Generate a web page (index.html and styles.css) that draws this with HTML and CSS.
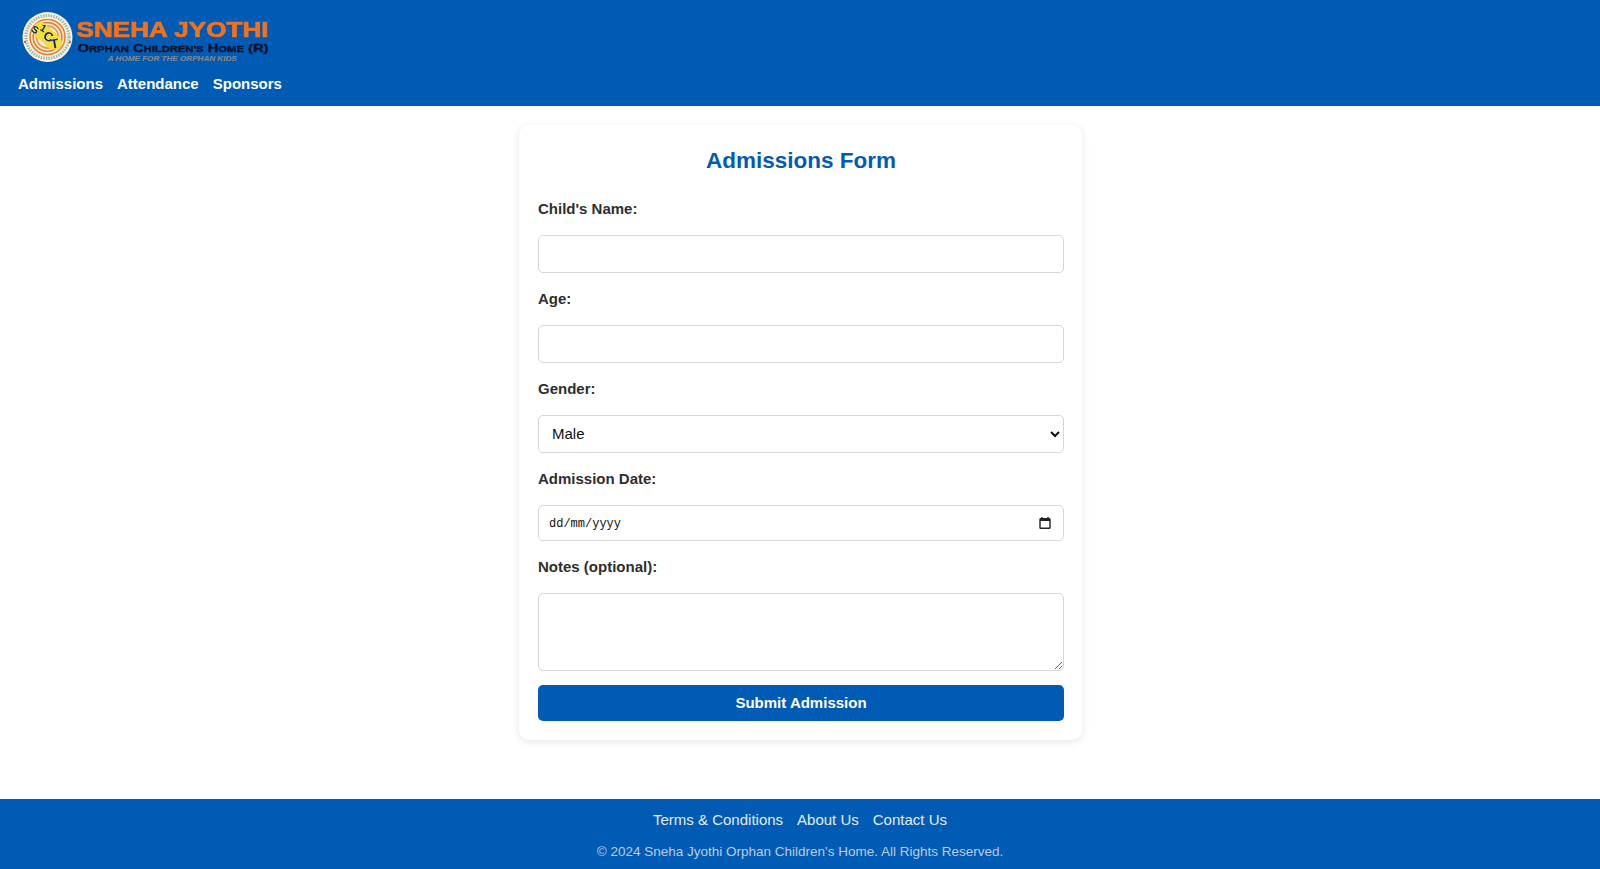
FILE: index.html
```html
<!DOCTYPE html>
<html lang="en">
<head>
<meta charset="utf-8">
<title>Admissions Form</title>
<link rel="stylesheet" href="styles.css">
</head>
<body>
<header class="site-header">
  <svg class="logo" width="252" height="56" viewBox="0 0 252 56" role="img" aria-label="Sneha Jyothi logo">
    <circle cx="27.5" cy="27" r="25" fill="#f3f4ea"/>
    <circle cx="27.5" cy="27" r="21.5" fill="none" stroke="#a4b39a" stroke-width="3" stroke-dasharray="1.4 1.2"/>
    <circle cx="27.5" cy="27" r="19" fill="#fbf6ee"/>
    <circle cx="27.5" cy="27" r="17.5" fill="none" stroke="#ee7d2a" stroke-width="1.6"/>
    <circle cx="27.5" cy="27" r="14.3" fill="none" stroke="#ee7d2a" stroke-width="1.8"/>
    <circle cx="27.5" cy="27" r="11" fill="none" stroke="#f09a4a" stroke-width="1.8"/>
    <path d="M13.5 17 C15.5 11 23.5 11 26.5 15 L37.5 25 C42.5 30 43.5 35 39.5 38 C35.5 41 31.5 40 27.5 37 L16.5 27 C13.5 24 12.5 21 13.5 17 Z" fill="#f4df3a"/>
    <text x="12" y="23" class="logo-s" transform="rotate(30 15 19)">S</text>
    <text x="20" y="21" class="logo-s" transform="rotate(30 22 19)">1</text>
    <text x="23.5" y="31" class="logo-c" transform="rotate(20 28 27)">C</text>
    <text x="30.5" y="38" class="logo-c" transform="rotate(-10 35 33)">T</text>
    <circle cx="5" cy="32" r="1.1" fill="#d8383a"/>
    <circle cx="50" cy="32" r="1.1" fill="#d8383a"/>
    <text x="56.5" y="27" class="logo-title" textLength="192" lengthAdjust="spacingAndGlyphs">SNEHA JYOTHI</text>
    <text x="57.5" y="42" class="logo-sub" textLength="191" lengthAdjust="spacingAndGlyphs">O<tspan class="logo-small">RPHAN</tspan> C<tspan class="logo-small">HILDREN'S</tspan> H<tspan class="logo-small">OME</tspan> (R)</text>
    <text x="88" y="50.5" class="logo-tag" textLength="129" lengthAdjust="spacingAndGlyphs">A HOME FOR THE ORPHAN KIDS</text>
  </svg>
  <nav class="main-nav">
    <a href="#">Admissions</a>
    <a href="#">Attendance</a>
    <a href="#">Sponsors</a>
  </nav>
</header>

<main class="content">
  <form class="card">
    <h2 class="card-title">Admissions Form</h2>
    <label class="field-label" for="name">Child's Name:</label>
    <input class="control" id="name" type="text">
    <label class="field-label" for="age">Age:</label>
    <input class="control" id="age" type="number">
    <label class="field-label" for="gender">Gender:</label>
    <select class="control control-select" id="gender"><option>Male</option><option>Female</option></select>
    <label class="field-label" for="date">Admission Date:</label>
    <div class="control date-field">
      <input class="date-input" id="date" type="text" placeholder="dd/mm/yyyy">
      <svg class="date-icon" width="12" height="12" viewBox="0 0 12 12" aria-hidden="true">
        <path d="M3 0v2M9 0v2" stroke="#222" stroke-width="1.4"/>
        <rect x="1" y="1.6" width="10" height="9.6" fill="none" stroke="#222" stroke-width="1.4" rx=".8"/>
        <rect x="1" y="1.6" width="10" height="2.4" fill="#222"/>
      </svg>
    </div>
    <label class="field-label" for="notes">Notes (optional):</label>
    <textarea class="control control-notes" id="notes"></textarea>
    <button class="submit" type="button">Submit Admission</button>
  </form>
</main>

<footer class="site-footer">
  <nav class="footer-nav">
    <a href="#">Terms &amp; Conditions</a>
    <a href="#">About Us</a>
    <a href="#">Contact Us</a>
  </nav>
  <p class="copyright">© 2024 Sneha Jyothi Orphan Children's Home. All Rights Reserved.</p>
</footer>
</body>
</html>
```
FILE: styles.css
```css
* { box-sizing: border-box; }
html, body { margin: 0; height: 100%; }
body {
  font-family: "Liberation Sans", Arial, sans-serif;
  color: #2e2e2e;
  background: #fff;
  display: flex;
  flex-direction: column;
  min-height: 869px;
}
.site-header {
  background: #005bb5;
  height: 106px;
  padding: 10px 18px 0;
  display: flex;
  flex-direction: column;
  align-items: flex-start;
}
.logo { display: block; margin-left: 2px; filter: blur(.35px); }
.logo-title { font: 900 21.7px "Liberation Sans", Arial, sans-serif; fill: #f2711c; stroke: #f2711c; stroke-width: .7px; }
.logo-sub { font: 700 11.6px "Liberation Sans", Arial, sans-serif; fill: #0b1530; stroke: #0b1530; stroke-width: .4px; }
.logo-small { font-size: 8.8px; }
.logo-tag { font: italic 700 6.4px "Liberation Sans", Arial, sans-serif; fill: #7f8690; stroke: #7f8690; stroke-width: .15px; }
.logo-s { font: 700 10px "Liberation Sans", Arial, sans-serif; fill: #142a6a; }
.logo-c { font: 700 13px "Liberation Sans", Arial, sans-serif; fill: #142a6a; }
.main-nav { display: flex; gap: 14px; margin-top: 9px; }
.main-nav a { color: #fff; font-weight: 700; font-size: 15px; line-height: 18px; text-decoration: none; }
.content { flex: 1; display: flex; justify-content: center; align-items: flex-start; padding-top: 19px; }
.card {
  width: 563px;
  margin-left: 1px;
  padding: 19px 18px 19px 19px;
  background: #fff;
  border-radius: 10px;
  box-shadow: 0 2px 8px rgba(0, 0, 0, .1);
  display: flex;
  flex-direction: column;
}
.card-title { margin: 3px 0 25px; color: #005bb5; font-size: 22.5px; line-height: 28px; text-align: center; font-weight: 700; }
.field-label { display: block; font-weight: 700; font-size: 15px; line-height: 18px; margin-bottom: 17px; }
.control {
  display: block;
  width: 100%;
  height: 38px;
  margin-bottom: 17px;
  padding: 0 13px;
  border: 1px solid #d6d6d6;
  border-radius: 5px;
  font-family: "Liberation Sans", Arial, sans-serif;
  font-size: 15px;
  color: #111;
  background: #fff;
}
.control-select { padding: 0 9px 1px; }
.date-field {
  display: flex;
  align-items: center;
  height: 36px;
  padding: 0 12px 0 10px;
}
.date-input {
  flex: 1;
  min-width: 0;
  border: 0;
  padding: 1px 0 0;
  outline: 0;
  background: none;
  font: 12px "Liberation Mono", monospace;
  color: #111;
}
.date-input::placeholder { color: #111; opacity: 1; }
.date-icon { display: block; flex: none; }
.control-notes { height: 78px; margin-bottom: 14px; resize: vertical; }
.submit {
  display: block;
  width: 100%;
  height: 36px;
  padding: 0 0 2px;
  border: 0;
  border-radius: 5px;
  background: #005bb5;
  color: #fff;
  font: 700 15px "Liberation Sans", Arial, sans-serif;
}
.site-footer { background: #005bb5; height: 70px; padding-top: 12px; text-align: center; }
.footer-nav { display: flex; justify-content: center; gap: 14px; }
.footer-nav a { color: #e3eaf5; font-size: 15px; line-height: 18px; text-decoration: none; }
.copyright { margin: 14px 0 0; color: #bccbe0; font-size: 13.5px; line-height: 17px; }
```
